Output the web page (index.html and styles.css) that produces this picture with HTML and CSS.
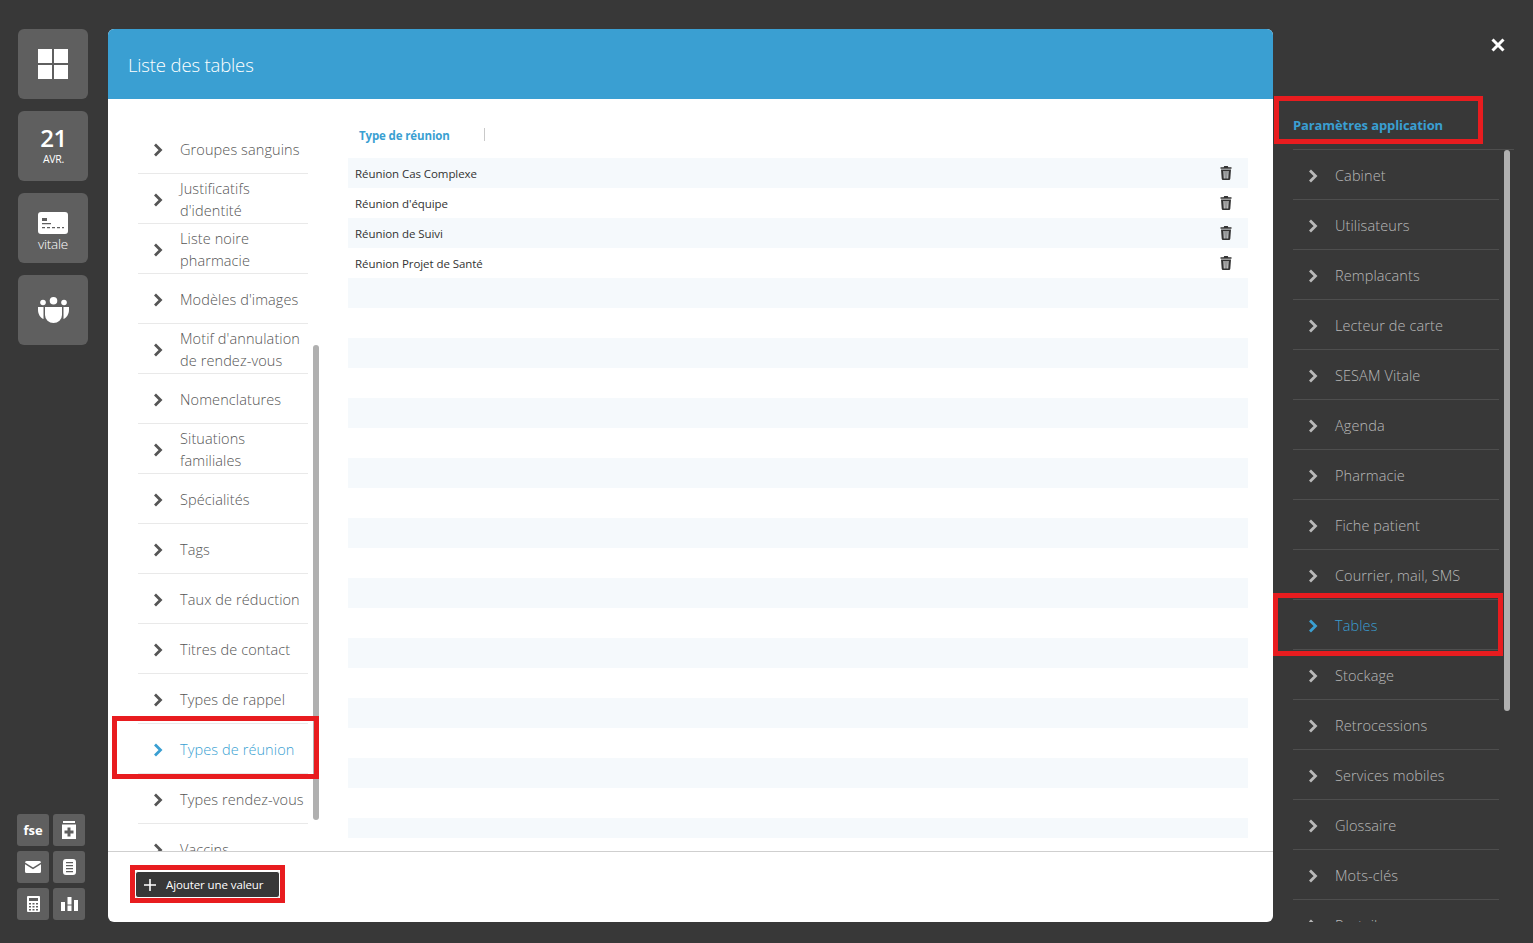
FILE: index.html
```html
<!DOCTYPE html>
<html lang="fr">
<head>
<meta charset="utf-8">
<title>Liste des tables</title>
<link rel="stylesheet" href="styles.css">
</head>
<body>
<svg class="defs" width="0" height="0" aria-hidden="true">
  <symbol id="chev" viewBox="0 0 10 14"><path d="M2 1.500 7.500 7 2 12.500" fill="none" stroke="currentColor" stroke-width="2.800"/></symbol>
  <symbol id="trash" viewBox="0 0 12 14"><path fill="#333" fill-rule="evenodd" d="M4.200 0h3.600l.5 1.200H11.500v1.600H.5V1.200h3.200zM1 3.500h10l-.7 9.300A1.300 1.300 0 0 1 9 14H3a1.300 1.300 0 0 1-1.300-1.200zM3.500 5l.3 7.500h.9L4.500 5zm2 0v7.500h1V5zm2 0-.2 7.500h.9l.3-7.500z"/></symbol>
</svg>
<div class="app">
  <nav class="rail">
    <div class="rail-top">
      <a class="tile"><svg width="30" height="30" viewBox="0 0 30 30"><path fill="#fff" d="M0 0h14v14H0zM16 0h14v14H16zM0 16h14v14H0zM16 16h14v14H16z"/></svg></a>
      <a class="tile tile-date"><span class="day">21</span><span class="month">AVR.</span></a>
      <a class="tile tile-vitale"><svg width="30" height="22" viewBox="0 0 30 22"><rect width="30" height="22" rx="3" fill="#fff"/><path fill="#5f5f5f" d="M4 6h5v3H4zM4 11h9v1.200H4zM4 15h3v1.200H4zM9 15h3v1.200H9zM14 15h3v1.200h-3zM19 15h3v1.200h-3zM24 15h2v1.200h-2z"/></svg><span>vitale</span></a>
      <a class="tile"><svg width="31" height="26" viewBox="0 0 31 26"><g fill="#fff"><circle cx="15.500" cy="3.800" r="3.800"/><circle cx="5" cy="5.500" r="2.800"/><circle cx="26" cy="5.500" r="2.800"/><path d="M7 10h17v8a8.500 8 0 0 1-17 0zM0 10h5.500v12C2.500 21 0 17 0 13zM31 10h-5.500v12c3-1 5.500-5 5.500-9z"/></g></svg></a>
    </div>
    <div class="mini-grid">
      <a class="mini mini-text">fse</a>
      <a class="mini"><svg width="14" height="18" viewBox="0 0 14 18"><path fill="#fff" d="M1 0h12v2H1zM0 3.500h14V18H0zM5.500 6.500v3h-3v3h3v3h3v-3h3v-3h-3v-3z" fill-rule="evenodd"/></svg></a>
      <a class="mini"><svg width="16" height="12" viewBox="0 0 16 12"><path fill="#fff" d="M1.500 0h13A1.500 1.500 0 0 1 16 1.500L8 6.500 0 1.500A1.500 1.500 0 0 1 1.500 0zM0 3.300 8 8.300l8-5v7.200A1.500 1.500 0 0 1 14.500 12h-13A1.500 1.500 0 0 1 0 10.500z"/></svg></a>
      <a class="mini"><svg width="13" height="16" viewBox="0 0 13 16"><path fill="#fff" fill-rule="evenodd" d="M3 0h7a3 3 0 0 1 3 3v10a3 3 0 0 1-3 3H3a3 3 0 0 1-3-3V3a3 3 0 0 1 3-3zM3 3v1.200h7V3zM3 6v1.200h7V6zM3 9v1.200h7V9zM3 12v1.200h7V12z"/></svg></a>
      <a class="mini"><svg width="13" height="16" viewBox="0 0 13 16"><path fill="#fff" fill-rule="evenodd" d="M1 0h11a1 1 0 0 1 1 1v14a1 1 0 0 1-1 1H1a1 1 0 0 1-1-1V1a1 1 0 0 1 1-1zM2 2v3h9V2zM2 7v1.500h2V7zM5.500 7v1.500h2V7zM9 7v1.500h2V7zM2 10v1.500h2V10zM5.500 10v1.500h2V10zM9 10v1.500h2V10zM2 13v1.500h2V13zM5.500 13v1.500h2V13zM9 13v1.500h2V13z"/></svg></a>
      <a class="mini"><svg width="17" height="14" viewBox="0 0 17 14"><path fill="#fff" d="M0 5h4v9H0zM6.500 8.500h4V14h-4zM6.500 0h4v7.500h-4zM13 3h4v11h-4z"/></svg></a>
    </div>
  </nav>

  <main class="modal">
    <header class="modal-head">Liste des tables</header>
    <div class="modal-body">
      <div class="list-wrap">
        <ul class="list">
          <li class="item"><svg class="chev"><use href="#chev"/></svg><span>Groupes sanguins</span></li>
          <li class="item"><svg class="chev"><use href="#chev"/></svg><span>Justificatifs<br>d'identité</span></li>
          <li class="item"><svg class="chev"><use href="#chev"/></svg><span>Liste noire<br>pharmacie</span></li>
          <li class="item"><svg class="chev"><use href="#chev"/></svg><span>Modèles d'images</span></li>
          <li class="item"><svg class="chev"><use href="#chev"/></svg><span>Motif d'annulation<br>de rendez-vous</span></li>
          <li class="item"><svg class="chev"><use href="#chev"/></svg><span>Nomenclatures</span></li>
          <li class="item"><svg class="chev"><use href="#chev"/></svg><span>Situations<br>familiales</span></li>
          <li class="item"><svg class="chev"><use href="#chev"/></svg><span>Spécialités</span></li>
          <li class="item"><svg class="chev"><use href="#chev"/></svg><span>Tags</span></li>
          <li class="item"><svg class="chev"><use href="#chev"/></svg><span>Taux de réduction</span></li>
          <li class="item"><svg class="chev"><use href="#chev"/></svg><span>Titres de contact</span></li>
          <li class="item"><svg class="chev"><use href="#chev"/></svg><span>Types de rappel</span></li>
          <li class="item active"><svg class="chev"><use href="#chev"/></svg><span>Types de réunion</span></li>
          <li class="item"><svg class="chev"><use href="#chev"/></svg><span>Types rendez-vous</span></li>
          <li class="item"><svg class="chev"><use href="#chev"/></svg><span>Vaccins</span></li>
        </ul>
        <div class="scroll scroll-left"></div>
        <div class="redbox red-reunion"></div>
      </div>
      <section class="table-pane">
        <div class="tabs"><span class="tab">Type de réunion</span></div>
        <div class="rows">
          <div class="row"><span>Réunion Cas Complexe</span><svg class="trash"><use href="#trash"/></svg></div>
          <div class="row"><span>Réunion d'équipe</span><svg class="trash"><use href="#trash"/></svg></div>
          <div class="row"><span>Réunion de Suivi</span><svg class="trash"><use href="#trash"/></svg></div>
          <div class="row"><span>Réunion Projet de Santé</span><svg class="trash"><use href="#trash"/></svg></div>
          <div class="row"></div><div class="row"></div><div class="row"></div><div class="row"></div>
          <div class="row"></div><div class="row"></div><div class="row"></div><div class="row"></div>
          <div class="row"></div><div class="row"></div><div class="row"></div><div class="row"></div>
          <div class="row"></div><div class="row"></div><div class="row"></div><div class="row"></div>
          <div class="row"></div><div class="row"></div><div class="row"></div>
        </div>
      </section>
    </div>
    <footer class="modal-foot">
      <button class="add-btn"><svg width="12" height="12" viewBox="0 0 12 12"><path fill="#fff" d="M5.200 0h1.600v5.200H12v1.600H6.800V12H5.200V6.800H0V5.200h5.200z"/></svg><span>Ajouter une valeur</span></button>
      <div class="redbox red-add"></div>
    </footer>
  </main>

  <aside class="settings">
    <button class="close" aria-label="Fermer"><svg width="14" height="14" viewBox="0 0 14 14"><path d="M1.500 1.500l11 11M12.500 1.500l-11 11" stroke="#fff" stroke-width="3"/></svg></button>
    <h2 class="settings-title">Paramètres application</h2>
    <div class="settings-scroll">
      <ul class="settings-list">
        <li class="item"><svg class="chev"><use href="#chev"/></svg><span>Cabinet</span></li>
        <li class="item"><svg class="chev"><use href="#chev"/></svg><span>Utilisateurs</span></li>
        <li class="item"><svg class="chev"><use href="#chev"/></svg><span>Remplacants</span></li>
        <li class="item"><svg class="chev"><use href="#chev"/></svg><span>Lecteur de carte</span></li>
        <li class="item"><svg class="chev"><use href="#chev"/></svg><span>SESAM Vitale</span></li>
        <li class="item"><svg class="chev"><use href="#chev"/></svg><span>Agenda</span></li>
        <li class="item"><svg class="chev"><use href="#chev"/></svg><span>Pharmacie</span></li>
        <li class="item"><svg class="chev"><use href="#chev"/></svg><span>Fiche patient</span></li>
        <li class="item"><svg class="chev"><use href="#chev"/></svg><span>Courrier, mail, SMS</span></li>
        <li class="item active"><svg class="chev"><use href="#chev"/></svg><span>Tables</span></li>
        <li class="item"><svg class="chev"><use href="#chev"/></svg><span>Stockage</span></li>
        <li class="item"><svg class="chev"><use href="#chev"/></svg><span>Retrocessions</span></li>
        <li class="item"><svg class="chev"><use href="#chev"/></svg><span>Services mobiles</span></li>
        <li class="item"><svg class="chev"><use href="#chev"/></svg><span>Glossaire</span></li>
        <li class="item"><svg class="chev"><use href="#chev"/></svg><span>Mots-clés</span></li>
        <li class="item"><svg class="chev"><use href="#chev"/></svg><span>Portail</span></li>
      </ul>
      <div class="scroll scroll-right"></div>
      <div class="redbox red-tables"></div>
    </div>
    <div class="redbox red-title"></div>
  </aside>
</div>
</body>
</html>
```

FILE: styles.css
```css
* { box-sizing: border-box; }
html, body { margin: 0; height: 100%; overflow: hidden; }
body { background: #383838; font-family: "Open Sans", "Liberation Sans", sans-serif; }
.defs { position: absolute; }
ul { list-style: none; margin: 0; padding: 0; }

.app { display: flex; height: 943px; }

/* Left rail */
.rail { width: 108px; flex: none; display: flex; flex-direction: column; justify-content: space-between; padding: 29px 0 23px 17px; }
.rail-top { display: flex; flex-direction: column; gap: 12px; padding-left: 1px; }
.tile { width: 70px; height: 70px; border-radius: 6px; background: #5f5f5f; display: flex; flex-direction: column; align-items: center; justify-content: center; color: #fff; }
.day { font-size: 24px; font-weight: 600; line-height: 24px; margin-bottom: 2px; padding-left: 1px; letter-spacing: -0.4px; }
.month { font-size: 10.500px; line-height: 14px; letter-spacing: -0.3px; padding-left: 1px; }
.tile-vitale { padding-top: 9px; gap: 2px; }
.tile-vitale span { font-size: 13.500px; line-height: 17px; font-weight: 300; letter-spacing: -0.2px; }
.mini-grid { display: grid; grid-template-columns: 32px 32px; grid-auto-rows: 32px; gap: 5px 4px; }
.mini { border-radius: 3px; background: #5f5f5f; display: flex; align-items: center; justify-content: center; color: #fff; }
.mini-text { font-size: 13px; font-weight: 700; }

/* Modal */
.modal { width: 1165px; flex: none; margin: 29px 0 21px; background: #fff; border-radius: 6px; display: flex; flex-direction: column; overflow: hidden; }
.modal-head { height: 70px; flex: none; background: #3a9fd2; color: #fff; padding: 0 20px; display: flex; align-items: center; font-size: 18.500px; font-weight: 300; letter-spacing: -0.15px; }
.modal-body { flex: 1; min-height: 0; display: flex; }
.list-wrap { width: 240px; flex: none; padding: 25px 0 0 30px; position: relative; overflow: hidden; }
.list { width: 170px; }

/* Shared menu row */
.item { height: 50px; padding-top: 2px; display: flex; align-items: center; border-bottom: 1px solid #e9e9e9; font-size: 14.500px; line-height: 22px; font-weight: 300; color: #555; letter-spacing: 0.1px; white-space: nowrap; }
.chev { width: 10px; height: 14px; flex: none; margin: 0 17px 0 15px; color: #555; }
.item.active, .item.active .chev { color: #3a9fd2; }

.scroll { position: absolute; width: 6px; background: #b0b0b0; border-radius: 3px; }
.scroll-left { left: 205px; top: 246px; height: 475px; }
.scroll-right { left: 231px; top: 0; height: 561px; }
.redbox { position: absolute; border: 5px solid #e81c1f; pointer-events: none; }
.red-reunion { left: 4px; top: 617px; width: 207px; height: 63px; }

/* Table */
.table-pane { flex: 1; min-width: 0; padding-right: 25px; display: flex; flex-direction: column; min-height: 0; }
.tabs { height: 59px; flex: none; display: flex; align-items: flex-start; padding: 29px 0 0 11px; }
.tab { font-size: 11.500px; font-weight: 700; line-height: 15px; width: 126px; color: #3a9fd2; border-right: 1px solid #c9c9c9; height: 13px; letter-spacing: -0.13px; }
.rows { height: 680px; overflow: hidden; }
.row { height: 30px; display: flex; align-items: center; justify-content: space-between; padding: 0 16px 0 7px; font-size: 11.500px; color: #333; letter-spacing: -0.07px; }
.row:nth-child(odd) { background: #f5f9fc; }
.trash { width: 12px; height: 14px; flex: none; }

/* Footer */
.modal-foot { height: 71px; flex: none; border-top: 1px solid #cfcfcf; padding: 19px 0 0 27px; position: relative; }
.add-btn { width: 145px; height: 27px; border: 1px solid #fff; border-radius: 3px; background: #383838; color: #fff; display: flex; align-items: center; padding: 0 0 0 8px; gap: 10px; font: 400 11.500px "Open Sans", sans-serif; letter-spacing: -0.1px; }
.red-add { left: 22px; top: 13px; width: 155px; height: 38px; }

/* Settings */
.settings { flex: 1; min-width: 0; position: relative; padding-top: 29px; display: flex; flex-direction: column; height: 922px; }
.close { position: absolute; right: 28px; top: 38px; width: 14px; height: 14px; padding: 0; background: none; border: 0; display: flex; }
.settings-title { margin: 0 19px 0 20px; height: 121px; flex: none; padding-top: 87px; font-size: 13px; line-height: 18px; font-weight: 700; color: #3a9fd2; border-bottom: 1px solid #4e4e4e; letter-spacing: -0.1px; }
.settings-scroll { flex: 1; min-height: 0; position: relative; overflow: hidden; padding-left: 20px; }
.settings-list { width: 206px; }
.settings-list .item { border-bottom-color: #4e4e4e; color: #b9b9b9; }
.settings-list .chev { color: #b9b9b9; }
.settings-list .item.active, .settings-list .item.active .chev { color: #3a9fd2; }
.red-tables { left: 0; top: 443px; width: 230px; height: 63px; }
.red-title { left: 1px; top: 96px; width: 209px; height: 48px; }
```
